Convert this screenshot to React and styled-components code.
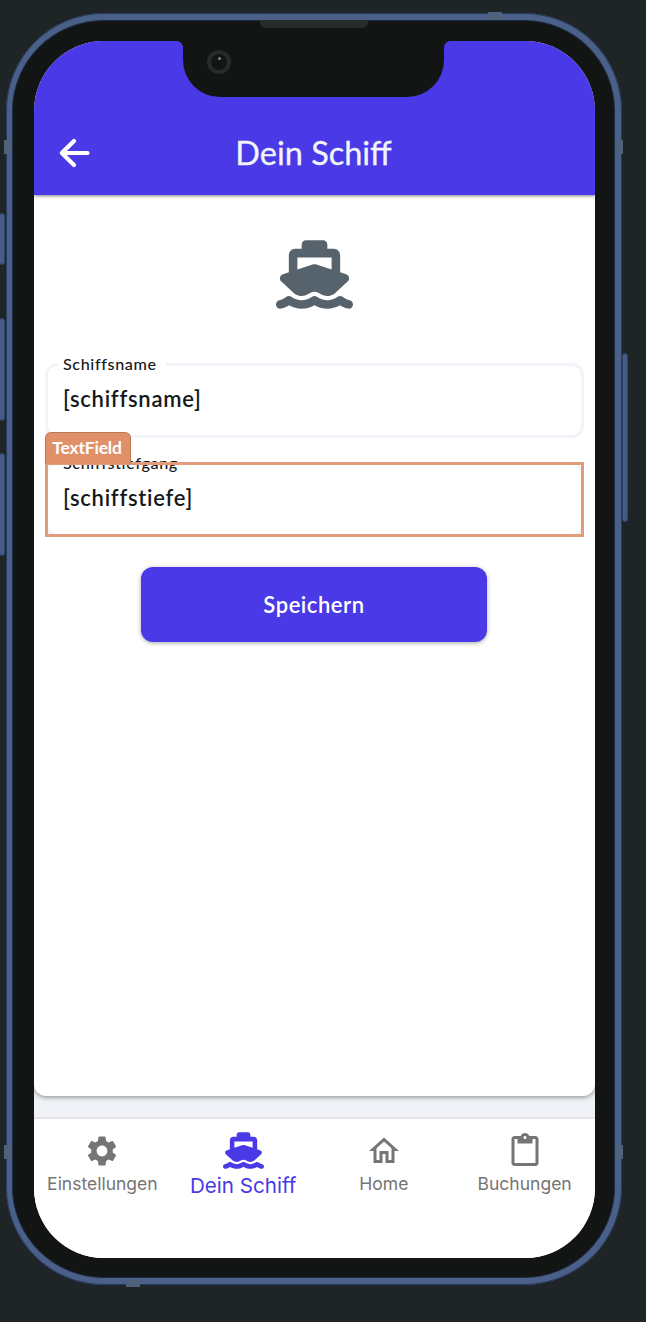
import React from 'react';
import styled, { createGlobalStyle } from 'styled-components';
import { FaShip } from 'react-icons/fa6';
import { MdSettings, MdOutlineHome, MdContentPaste } from 'react-icons/md';

const primary = '#4939e6';
const body = "'Lato', 'Liberation Sans', sans-serif";
const system = "'Inter', 'Liberation Sans', sans-serif";

const GlobalStyle = createGlobalStyle`
  *, *::before, *::after { box-sizing: border-box; }
  body { margin: 0; background: #1f2427; }
`;

const Stage = styled.main`
  position: relative;
  display: flex;
  width: 646px;
  height: 1322px;
  padding-top: 13px;
  overflow: hidden;
  background: #1f2427;
`;

const KeyRail = styled.div`
  flex: none;
  display: flex;
  flex-direction: column;
  align-items: flex-end;
  width: 6px;
  padding-top: ${(p) => p.$start}px;
  padding-right: ${(p) => p.$inset || 0}px;
`;

const SideKey = styled.span`
  width: 6px;
  height: ${(p) => p.$height}px;
  margin-bottom: ${(p) => p.$after || 0}px;
  border: 1px solid #304568;
  border-radius: 3px;
  background: #455c86;
`;

const Phone = styled.div`
  position: relative;
  flex: none;
  width: 616px;
  height: 1272px;
  padding: 21px 19px 20px 22px;
  border: 7px solid #4a6088;
  border-left-width: 6px;
  border-radius: 98px;
  background: #131514;
  box-shadow: inset 0 0 0 1px #1c2b46;
  outline: 1px solid #263b5e;
  outline-offset: -1px;
`;

const Antenna = styled.span`
  position: absolute;
  left: ${(p) => p.$x}px;
  top: ${(p) => p.$y}px;
  width: ${(p) => (p.$flat ? 14 : 8)}px;
  height: ${(p) => (p.$flat ? 8 : 14)}px;
  background: #4f627c;
`;

const Speaker = styled.span`
  position: absolute;
  left: 248px;
  top: 0;
  width: 108px;
  height: 8px;
  border-radius: 0 0 6px 6px;
  background: #262b2b;
`;

const Screen = styled.div`
  display: flex;
  flex-direction: column;
  width: 561px;
  height: 1217px;
  border-radius: 70px;
  overflow: hidden;
  background: #f0f2f7;
`;

const AppBar = styled.header`
  z-index: 1;
  flex: none;
  display: flex;
  flex-direction: column;
  height: 154px;
  background: ${primary};
  box-shadow: 0 1px 3px rgba(0, 0, 0, 0.5);
`;

const NotchRow = styled.div`
  display: flex;
  justify-content: center;
  height: 56px;
  padding-right: 2px;
`;

const NotchShoulder = styled.span`
  width: 6px;
  height: 6px;
  background: radial-gradient(circle at ${(p) => (p.$right ? '100%' : '0')} 100%, ${primary} 5.5px, #131514 6px);
`;

const Notch = styled.div`
  display: flex;
  width: 261px;
  height: 56px;
  padding: 9px 0 0 24px;
  border-radius: 0 0 37px 37px;
  background: #131514;
`;

const Camera = styled.span`
  display: flex;
  justify-content: center;
  width: 24px;
  height: 24px;
  padding-top: 3px;
  border: 4.5px solid #262b2b;
  border-radius: 50%;

  &::after {
    content: '';
    width: 3px;
    height: 3px;
    border-radius: 50%;
    background: #7b8284;
  }
`;

const Toolbar = styled.div`
  display: grid;
  grid-template-columns: 80px 1fr 82px;
  align-items: center;
  height: 83px;
  margin-top: 14px;
`;

const BackButton = styled.button`
  display: flex;
  padding: 0 0 0 24px;
  border: 0;
  background: none;
`;

const Title = styled.h1`
  margin: 0;
  text-align: center;
  white-space: nowrap;
  color: #f1f4f8;
  font: 400 32.5px/40px ${body};
  font-variant-ligatures: common-ligatures;
  -webkit-text-stroke: 0.3px #f1f4f8;
`;

const Content = styled.section`
  flex: none;
  display: flex;
  flex-direction: column;
  align-items: center;
  height: 901px;
  padding: 44px 11px 0;
  border-radius: 0 0 12px 12px;
  background: #fff;
  box-shadow: 0 1px 5px rgba(0, 0, 0, 0.45);
`;

const HeroShip = styled(FaShip)`
  flex: none;
  width: 77px;
  height: 71px;
  margin-right: 1px;
  color: #57636c;
`;

const Form = styled.form`
  display: flex;
  flex-direction: column;
  align-items: center;
  gap: 16px;
  padding-top: 45px;
`;

const FieldWrap = styled.div`
  position: relative;
  display: flex;
`;

const FieldBox = styled.fieldset`
  width: 539px;
  height: 83px;
  margin: 0;
  padding: 11px 15px 0 10px;
  border: 3px solid #f1f4f8;
  border-radius: 12px;
`;

const FieldLabel = styled.legend`
  height: 19px;
  padding: 0 9px 0 5px;
  color: #14181b;
  font: 500 16.2px/17px ${body};
  letter-spacing: 0.6px;
`;

const FieldValue = styled.div`
  padding-left: 5px;
  color: #14181b;
  font: 600 22px/28px ${body};
  letter-spacing: 0.75px;
`;

const Selection = styled.div`
  position: absolute;
  inset: 7.5px 0 0;
  border: 3px solid #e29c79;
`;

const SelectionTag = styled.span`
  position: absolute;
  left: -3px;
  bottom: calc(100% + 1px);
  width: 86px;
  height: 32px;
  padding-right: 2px;
  border: 1.5px solid #bb7958;
  border-bottom-color: #e0916a;
  border-radius: 6px 6px 0 0;
  background: #e0916a;
  color: #fff;
  text-align: center;
  font: 700 17.5px/30px ${body};
  letter-spacing: -0.2px;
`;

const SaveButton = styled.button`
  width: 346px;
  height: 75px;
  margin: 14px 1px 0 0;
  padding: 0;
  border: 0;
  border-radius: 12px;
  background: ${primary};
  color: #fff;
  font: 600 22px/75px ${body};
  letter-spacing: 0.55px;
  box-shadow: 0 1px 4px rgba(0, 0, 0, 0.35);
`;

const TabBar = styled.nav`
  display: grid;
  grid-template-columns: repeat(4, 1fr);
  height: 139px;
  margin: 23px 0 0 -2px;
  background: #fff;
  box-shadow: 0 -1px 2px rgba(0, 0, 0, 0.12);
`;

const Tab = styled.a`
  display: flex;
  flex-direction: column;
  align-items: center;
  padding-top: 12px;
  white-space: nowrap;
  color: ${(p) => (p.$active ? primary : '#757575')};
  font: 400 ${(p) => (p.$active ? '20.6px/32px' : '17.5px/28px')} ${system};
`;

const TabIcon = styled.span`
  display: flex;
  align-items: center;
  justify-content: center;
  width: 42px;
  height: 39px;
`;

const tabs = [
  { label: 'Einstellungen', Icon: MdSettings, size: 36 },
  { label: 'Dein Schiff', Icon: FaShip, size: 41, active: true },
  { label: 'Home', Icon: MdOutlineHome, size: 36 },
  { label: 'Buchungen', Icon: MdContentPaste, size: 36 },
];

function Field({ label, value, selected }) {
  return (
    <FieldWrap>
      <FieldBox>
        <FieldLabel>{label}</FieldLabel>
        <FieldValue>{value}</FieldValue>
      </FieldBox>
      {selected && (
        <Selection>
          <SelectionTag>TextField</SelectionTag>
        </Selection>
      )}
    </FieldWrap>
  );
}

export default function App() {
  return (
    <>
      <GlobalStyle />
      <Stage>
        <KeyRail $start={200} $inset={1}>
          <SideKey $height={52} $after={53} />
          <SideKey $height={103} $after={32} />
          <SideKey $height={103} />
        </KeyRail>
        <Phone>
          <Screen>
            <AppBar>
              <NotchRow>
                <NotchShoulder />
                <Notch><Camera /></Notch>
                <NotchShoulder $right />
              </NotchRow>
              <Toolbar>
                <BackButton aria-label="Zurück">
                  <svg width="33" height="32" viewBox="0 0 33 32" fill="none" stroke="#fff" strokeWidth="4.2" strokeLinecap="round" strokeLinejoin="round">
                    <path d="M29.5 16H4M16 4 3.8 16 16 28" />
                  </svg>
                </BackButton>
                <Title>Dein Schiff</Title>
              </Toolbar>
            </AppBar>
            <Content>
              <HeroShip />
              <Form>
                <Field label="Schiffsname" value="[schiffsname]" />
                <Field label="Schiffstiefgang" value="[schiffstiefe]" selected />
                <SaveButton type="button">Speichern</SaveButton>
              </Form>
            </Content>
            <TabBar>
              {tabs.map(({ label, Icon, size, active }) => (
                <Tab key={label} $active={active}>
                  <TabIcon><Icon size={size} /></TabIcon>
                  {label}
                </Tab>
              ))}
            </TabBar>
          </Screen>
          <Speaker />
        </Phone>
        <KeyRail $start={340}>
          <SideKey $height={169} />
        </KeyRail>
        <Antenna $flat $x={488} $y={12} />
        <Antenna $flat $x={126} $y={1279} />
        <Antenna $x={4} $y={140} />
        <Antenna $x={4} $y={1145} />
        <Antenna $x={615} $y={140} />
        <Antenna $x={615} $y={1145} />
      </Stage>
    </>
  );
}
